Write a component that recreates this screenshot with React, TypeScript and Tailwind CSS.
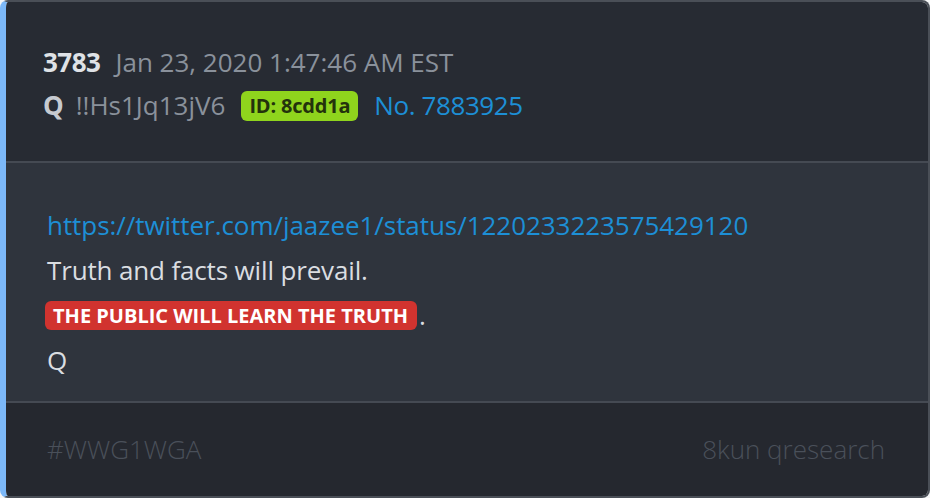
import React from "react";

const font = { fontFamily: '"Open Sans", "Noto Sans", sans-serif' };

export default function App() {
  return (
    <div className="w-[930px] h-[498px] bg-[#f4f5f6]" style={font}>
      <div className="h-full flex flex-col overflow-hidden rounded-[8px] border-2 border-l-[6px] border-[#4a4f57] border-l-[#7cb8f8]">
        {/* Header */}
        <div className="h-[159px] shrink-0 bg-[#272b33] pl-[37px] pt-[39px] text-[26px]">
          <div className="h-[43px] flex items-center gap-[15px]">
            <span className="font-bold text-[#dfe2e6] tracking-[-0.5px]">3783</span>
            <span className="text-[#8a919b]">Jan 23, 2020 1:47:46 AM EST</span>
          </div>
          <div className="h-[43px] flex items-center">
            <span className="font-bold text-[#c6cad0] mr-[12px]">Q</span>
            <span className="text-[#8a919b] mr-[16px]">!!Hs1Jq13jV6</span>
            <span className="h-[30px] px-[8px] flex items-center rounded-[6px] bg-[#8fd41d] text-[20px] font-bold text-[#23320c] mr-[16px] tracking-[-0.2px]">
              ID: 8cdd1a
            </span>
            <span className="text-[#1d8fd6] tracking-[-0.4px]">No. 7883925</span>
          </div>
        </div>
        <div className="h-[2px] bg-[#454a53] shrink-0" />

        {/* Body */}
        <div className="h-[238px] shrink-0 bg-[#2f343d] pl-[41px] pt-[40px] text-[26px] text-[#dadde1] leading-[45px]">
          <div className="text-[#1d8fd6] tracking-[-0.05px]">https://twitter.com/jaazee1/status/1220233223575429120</div>
          <div className="tracking-[-0.15px]">Truth and facts will prevail.</div>
          <div className="flex items-center">
            <span className="h-[29px] -ml-[2px] pl-[8px] pr-[9px] flex items-center rounded-[6px] bg-[#d1332f] text-[20px] font-bold text-white leading-none">
              THE PUBLIC WILL LEARN THE TRUTH
            </span>
            <span className="ml-[2px]">.</span>
          </div>
          <div>Q</div>
        </div>
        <div className="h-[2px] bg-[#454a53] shrink-0" />

        {/* Footer */}
        <div className="flex-1 bg-[#25282f] pl-[41px] pr-[43px] flex items-center justify-between text-[26px] font-light text-[#4a505a]">
          <span>#WWG1WGA</span>
          <span>8kun qresearch</span>
        </div>
      </div>
    </div>
  );
}
